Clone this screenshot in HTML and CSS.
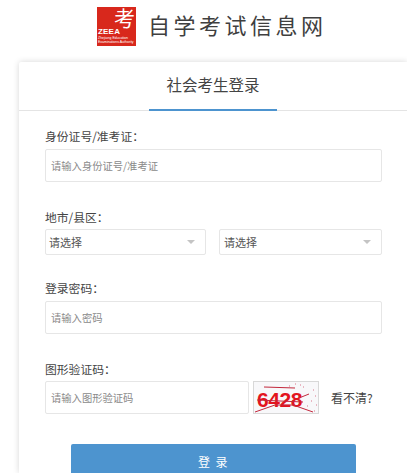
FILE: index.html
```html
<!DOCTYPE html>
<html lang="zh-CN">
<head>
<meta charset="utf-8">
<title>社会考生登录</title>
<link rel="stylesheet" href="styles.css">
</head>
<body>
<header class="header">
  <div class="logo-mark">
    <span class="logo-char">考</span>
    <span class="logo-abbr">ZEEA</span>
    <span class="logo-sub">Zhejiang Education<br>Examinations Authority</span>
  </div>
  <div class="logo-name">自学考试信息网</div>
</header>
<main class="card">
  <div class="tabs"><div class="tab">社会考生登录</div></div>
  <form class="form">
    <div class="field field-id">
      <label class="label">身份证号/准考证：</label>
      <div class="input placeholder">请输入身份证号/准考证</div>
    </div>
    <div class="field field-area">
      <label class="label label-area">地市/县区：</label>
      <div class="selects">
        <div class="select select-a"><span>请选择</span><i class="caret"></i></div>
        <div class="select select-b"><span>请选择</span><i class="caret"></i></div>
      </div>
    </div>
    <div class="field field-pass">
      <label class="label">登录密码：</label>
      <div class="input placeholder">请输入密码</div>
    </div>
    <div class="field field-code">
      <label class="label label-code">图形验证码：</label>
      <div class="code-row">
        <div class="input placeholder code-input">请输入图形验证码</div>
        <svg class="captcha" viewBox="0 0 66 33" width="66" height="33" aria-label="验证码">
          <rect width="66" height="33" fill="#f8f8fa"/>
          <rect x="0.5" y="0.5" width="65" height="32" fill="none" stroke="#d8d8d8"/>
          <text x="4" y="26" class="captcha-text">6428</text>
          <path d="M11 6 L42 7 M2 31 L22 24 L40 24 L60 31 M4 19 L50 21 M46 17 L56 13" fill="none" stroke="#c3283c" stroke-width="1"/>
          <path d="M36 5h1M42 3h1M50 6h1M60 9h1M62 15h1M58 20h1M63 24h1M61 30h1M54 25h1M47 4h1" stroke="#d9748a" stroke-width="1.2"/>
        </svg>
        <span class="refresh">看不清?</span>
      </div>
    </div>
    <button class="submit" type="button">登 录</button>
  </form>
</main>
</body>
</html>
```

FILE: styles.css
```css
* { box-sizing: border-box; }
html, body { margin: 0; padding: 0; height: 473px; overflow: hidden; background: #fff; }
body { font-family: "Noto Sans CJK SC", "Liberation Sans", sans-serif; color: #444; }

.header { height: 62px; display: flex; align-items: flex-start; padding: 7px 0 0 97px; background: #fff; }
.logo-mark { position: relative; width: 39px; height: 39px; background: #d8281c; color: #fff; flex: none; }
.logo-char { position: absolute; left: 17px; top: 0; font-size: 21px; line-height: 21px; }
.logo-abbr { position: absolute; left: 1px; top: 21px; font: 700 8px/8px "Liberation Sans", sans-serif; letter-spacing: .2px; }
.logo-sub { position: absolute; left: 1px; top: 29px; font: 3.5px/4px "Liberation Sans", sans-serif; white-space: nowrap; }
.logo-name { margin: 4px 0 0 12px; font-size: 22px; line-height: 26px; letter-spacing: 3.5px; color: #3f3f3f; white-space: nowrap; }

.card { margin-left: 19px; height: 411px; background: #fff; box-shadow: 0 0 6px rgba(0,0,0,.16); border-radius: 2px 0 0 0; }
.tabs { height: 49px; border-bottom: 1px solid #e4e4e4; display: flex; justify-content: center; }
.tab { width: 128px; height: 49px; border-bottom: 2px solid #4d94cf; text-align: center; font-size: 15.5px; line-height: 45px; color: #444; }

.form { padding: 0 25px 0 26px; }
.field { display: flex; flex-direction: column; }
.field-id { margin-top: 16px; }
.field-area { margin-top: 26px; }
.field-pass { margin-top: 24px; }
.field-code { margin-top: 26px; }
.label { height: 22px; font-size: 11.8px; line-height: 18px; color: #444; }
.label-area { height: 21px; }
.label-code { height: 21px; }
.input { height: 33px; border: 1px solid #e6e6e6; border-radius: 2px; padding-left: 5px; font-size: 10.3px; line-height: 31px; background: #fff; }
.placeholder { color: #8a8a8a; }

.selects { display: flex; gap: 13px; }
.select { height: 26px; border: 1px solid #e6e6e6; border-radius: 2px; padding: 0 5px 0 3px; display: flex; align-items: center; justify-content: space-between; font-size: 11px; color: #555; }
.select-a { width: 161px; }
.select-b { width: 163px; }
.select-b span { margin-left: 1px; }
.caret { width: 0; height: 0; border: 4px solid transparent; border-top: 4px solid #c4c4c4; border-bottom: 0; margin-right: 5px; }

.code-row { display: flex; align-items: center; }
.code-input { width: 204px; flex: none; }
.captcha { margin-left: 4px; flex: none; display: block; }
.captcha-text { font: 700 21px "Liberation Sans", sans-serif; fill: #e3141e; letter-spacing: -.4px; }
.refresh { margin-left: 12px; font-size: 12px; color: #444; white-space: nowrap; }

.submit { display: block; width: 285px; height: 36px; margin: 30px 0 0 26px; background: #4d94cf; border: 0; border-radius: 2px; color: #fff; font: 12px/16px "Noto Sans CJK SC", sans-serif; letter-spacing: 1.5px; padding: 0; }
```
